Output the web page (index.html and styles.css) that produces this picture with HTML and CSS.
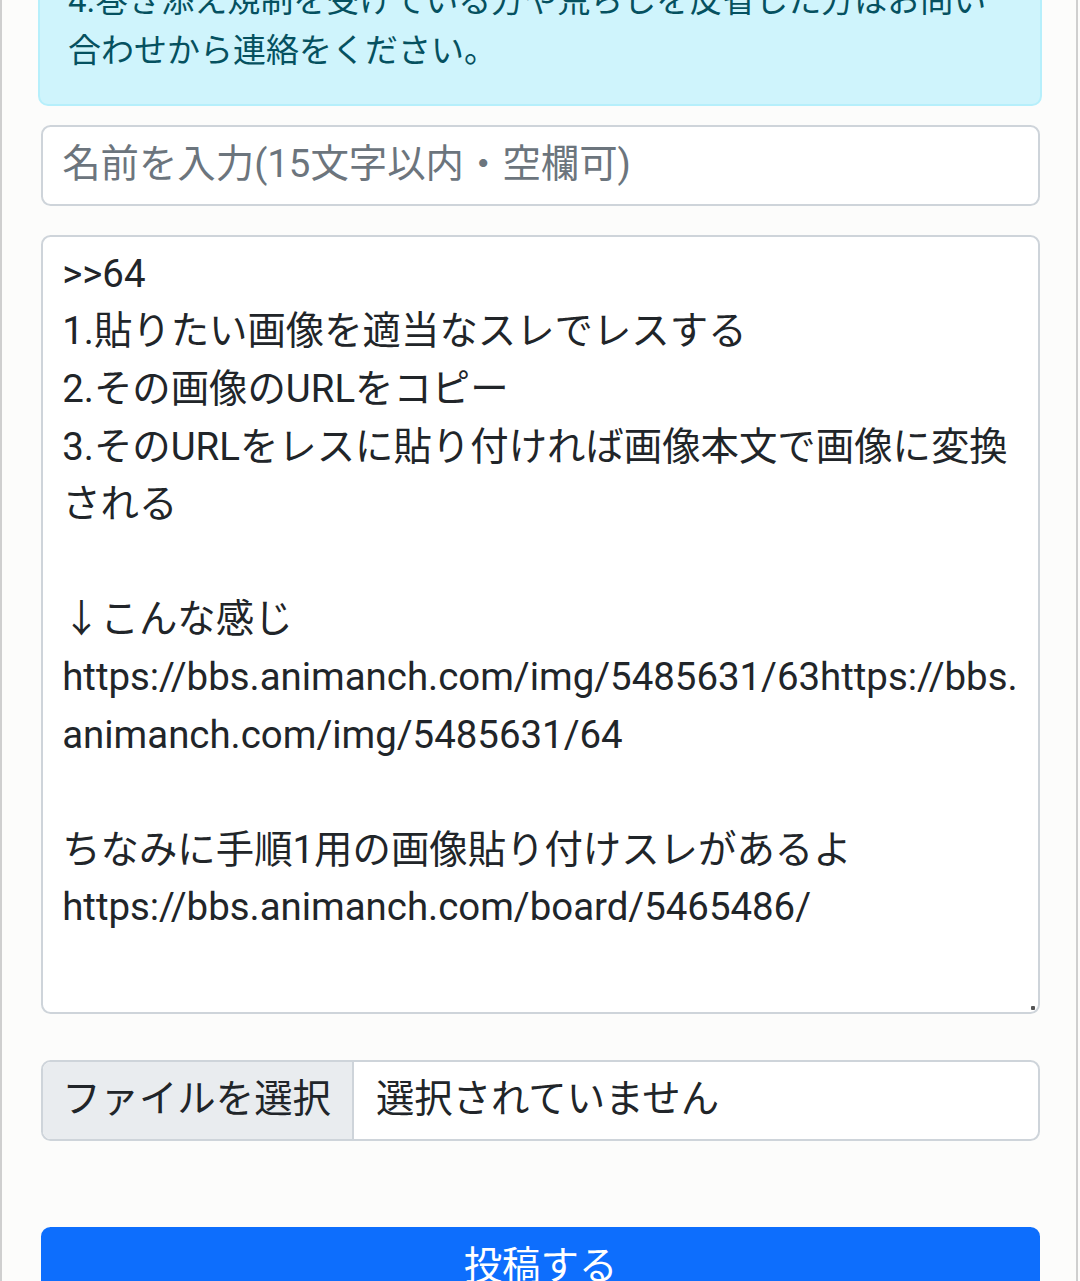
FILE: index.html
```html
<!DOCTYPE html>
<html lang="ja">
<head>
<meta charset="utf-8">
<title>投稿フォーム</title>
<link rel="stylesheet" href="styles.css">
</head>
<body>
<div class="page">
  <div class="alert">4.巻き添え規制を受けている方や荒らしを反省した方はお問い<br>合わせから連絡をください。</div>
  <form class="post-form">
    <input class="field name-field" type="text" placeholder="名前を入力(15文字以内・空欄可)">
    <div class="textarea-wrap">
      <textarea class="field body-field">&gt;&gt;64
1.貼りたい画像を適当なスレでレスする
2.その画像のURLをコピー
3.そのURLをレスに貼り付ければ画像本文で画像に変換される

↓こんな感じ
https://bbs.animanch.com/img/5485631/63https://bbs.animanch.com/img/5485631/64

ちなみに手順1用の画像貼り付けスレがあるよ
https://bbs.animanch.com/board/5465486/</textarea>
    </div>
    <div class="file-field"><span class="file-btn">ファイルを選択</span><span class="file-name">選択されていません</span></div>
    <button class="submit" type="button">投稿する</button>
  </form>
</div>
</body>
</html>
```

FILE: styles.css
```css
html, body {
  margin: 0;
  padding: 0;
  background: #fcfcfb;
}

body {
  font-family: Roboto, "Noto Sans CJK JP", sans-serif;
  color: #212529;
}

.page {
  display: flow-root;
  box-sizing: border-box;
  width: 1078px;
  min-height: 1281px;
  border-left: 2px solid #cfcfcf;
  border-right: 2px solid #cfcfcf;
  padding: 0 34px 0 36px;
}

.alert {
  margin-top: -56px;
  margin-bottom: 19px;
  padding: 30px 28px 29px 28px;
  background: #cff4fc;
  border: 2px solid #b6effb;
  border-radius: 10px;
  color: #055160;
  font-size: 33px;
  line-height: 49.5px;
}

.post-form {
  display: flex;
  flex-direction: column;
  margin: 0 0 0 3px;
  width: 999px;
}

.field {
  display: block;
  box-sizing: border-box;
  width: 100%;
  margin: 0;
  font-family: Roboto, "Noto Sans CJK JP", sans-serif;
  font-size: 38.4px;
  line-height: 57.6px;
  color: #212529;
  background: #fff;
  border: 2px solid #ced4da;
  border-radius: 9.6px;
  padding: 7.6px 19.2px 11.6px;
  outline: none;
}

.name-field {
  height: 80.8px;
  margin-bottom: 29.5px;
}

.name-field::placeholder {
  color: #6c757d;
  opacity: 1;
}

.textarea-wrap {
  position: relative;
  margin-bottom: 46px;
}

.body-field {
  height: 779px;
  resize: none;
  overflow: hidden;
  overflow-wrap: break-word;
}

.textarea-wrap::after {
  content: "";
  position: absolute;
  right: 5px;
  bottom: 4px;
  width: 4px;
  height: 4px;
  border-radius: 1px;
  background: #555;
}

.file-field {
  display: flex;
  box-sizing: border-box;
  height: 80.8px;
  border: 2px solid #ced4da;
  border-radius: 9.6px;
  background: #fff;
  overflow: hidden;
  margin-bottom: 86px;
  font-size: 38.4px;
  line-height: 57.6px;
}

.file-btn {
  display: flex;
  align-items: center;
  padding: 0 21px 3px 19.2px;
  background: #e9ecef;
  border-right: 2px solid #ced4da;
  color: #212529;
}

.file-name {
  display: flex;
  align-items: center;
  padding: 0 0 3px 22px;
  color: #212529;
}

.submit {
  box-sizing: border-box;
  width: 100%;
  height: 81.6px;
  margin: 0;
  padding: 7.6px 19.2px 11.6px;
  border: 2px solid #0d6efd;
  border-radius: 9.6px;
  background: #0d6efd;
  color: #fff;
  font-family: Roboto, "Noto Sans CJK JP", sans-serif;
  font-size: 38.4px;
  line-height: 57.6px;
  text-align: center;
}
```
